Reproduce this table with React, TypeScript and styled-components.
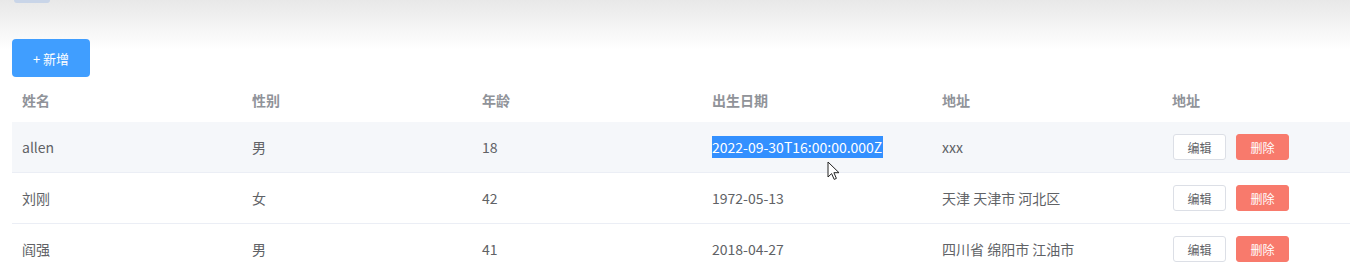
import React from "react";
import styled, { createGlobalStyle } from "styled-components";

const GlobalStyle = createGlobalStyle`
  html, body {
    margin: 0;
    padding: 0;
    background: #fff;
    overflow: hidden;
  }
  body {
    font-family: "Noto Sans CJK SC", "Noto Sans", sans-serif;
    font-size: 14px;
    color: #606266;
  }
`;

interface Person {
  name: string;
  gender: string;
  age: number;
  birth: string;
  address: string;
  selected?: boolean;
  hover?: boolean;
}

const people: Person[] = [
  { name: "allen", gender: "男", age: 18, birth: "2022-09-30T16:00:00.000Z", address: "xxx", selected: true, hover: true },
  { name: "刘刚", gender: "女", age: 42, birth: "1972-05-13", address: "天津 天津市 河北区" },
  { name: "阎强", gender: "男", age: 41, birth: "2018-04-27", address: "四川省 绵阳市 江油市" },
];

const headers = ["姓名", "性别", "年龄", "出生日期", "地址", "地址"];

const App = () => {
  return (
    <>
      <GlobalStyle />
      <Page>
        <TopTag />
        <AddButton>+ 新增</AddButton>
        <Table>
          <HeadRow>
            {headers.map((h, i) => (
              <HeadCell key={i}>{h}</HeadCell>
            ))}
          </HeadRow>
          {people.map((p) => (
            <Row key={p.name} $hover={p.hover}>
              <Cell>{p.name}</Cell>
              <Cell>{p.gender}</Cell>
              <Cell>{p.age}</Cell>
              <Cell>
                {p.selected ? (
                  <DateWrap>
                    <Selected>{p.birth}</Selected>
                    <Cursor width="14" height="20" viewBox="0 0 14 20">
                      <path
                        d="M1 1 L1 16 L4.6 12.6 L7.2 18.4 L9.4 17.4 L6.9 11.7 L12 11.7 Z"
                        fill="#fff"
                        stroke="#222"
                        strokeWidth="1"
                        strokeLinejoin="round"
                      />
                    </Cursor>
                  </DateWrap>
                ) : (
                  p.birth
                )}
              </Cell>
              <Cell>{p.address}</Cell>
              <Cell>
                <Actions>
                  <SmallButton>编辑</SmallButton>
                  <SmallButton $danger>删除</SmallButton>
                </Actions>
              </Cell>
            </Row>
          ))}
        </Table>
      </Page>
    </>
  );
};

const Page = styled.div`
  min-height: 267px;
  padding: 0 12px;
  background: linear-gradient(#e8e8e8 0px, #f6f6f6 30px, #ffffff 50px);
  display: flex;
  flex-direction: column;
  align-items: flex-start;
`;

const TopTag = styled.div`
  width: 36px;
  height: 3px;
  margin-left: 2px;
  background: #c9d5e8;
  border-radius: 0 0 3px 3px;
`;

const AddButton = styled.button`
  margin-top: 36px;
  width: 78px;
  height: 38px;
  border: none;
  border-radius: 4px;
  background: #409eff;
  color: #fff;
  font-family: inherit;
  font-size: 13px;
  cursor: pointer;
`;

const Table = styled.div`
  margin-top: 1px;
  width: 1380px;
`;

const HeadRow = styled.div`
  display: grid;
  grid-template-columns: repeat(6, 230px);
  height: 44px;
  align-items: center;
`;

const HeadCell = styled.div`
  padding-left: 10px;
  color: #909399;
  font-weight: bold;
  font-size: 14px;
`;

const Row = styled.div<{ $hover?: boolean }>`
  display: grid;
  grid-template-columns: repeat(6, 230px);
  height: 50px;
  align-items: center;
  border-bottom: 1px solid #ebeef5;
  background: ${(p) => (p.$hover ? "#f5f7fa" : "#fff")};
`;

const Cell = styled.div`
  padding-left: 10px;
  font-size: 14px;
  color: #606266;
`;

const DateWrap = styled.span`
  position: relative;
  display: inline-block;
`;

const Selected = styled.span`
  background: #3390ff;
  color: #fff;
  padding: 1px 1px 1px 0;
`;

const Cursor = styled.svg`
  position: absolute;
  left: 115px;
  top: 24px;
`;

const Actions = styled.div`
  display: flex;
  gap: 10px;
  margin-left: 1px;
`;

const SmallButton = styled.button<{ $danger?: boolean }>`
  width: 53px;
  height: 26px;
  border-radius: 3px;
  font-family: inherit;
  font-size: 12px;
  border: 1px solid ${(p) => (p.$danger ? "#f87a6c" : "#dcdfe6")};
  background: ${(p) => (p.$danger ? "#f87a6c" : "#fff")};
  color: ${(p) => (p.$danger ? "#fff" : "#606266")};
  padding: 0;
  cursor: pointer;
`;

export default App;
